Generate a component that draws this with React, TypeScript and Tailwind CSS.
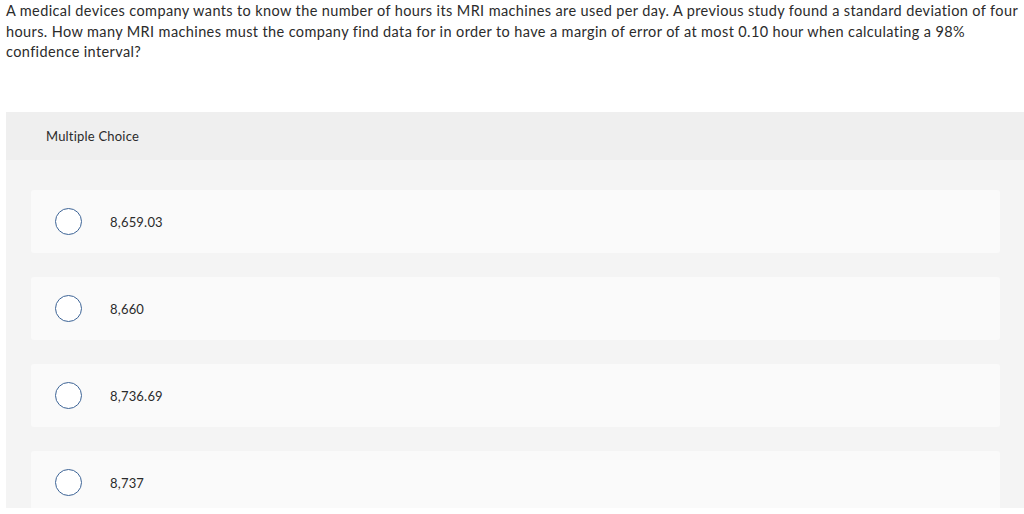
const choices = ["8,659.03", "8,660", "8,736.69", "8,737"];

export default function App() {
  return (
    <div
      className="h-[514px] overflow-hidden bg-white text-[#2b2b2b]"
      style={{ fontFamily: "Lato, 'Open Sans', Arial, sans-serif" }}
    >
      <p className="px-[6px] pt-[1px] text-[14.5px] leading-[20.5px] whitespace-nowrap tracking-[0.38px]">
        A medical devices company wants to know the number of hours its MRI machines are used per day. A previous study found a standard deviation of four
        <br />
        hours. How many MRI machines must the company find data for in order to have a margin of error of at most 0.10 hour when calculating a 98%
        <br />
        confidence interval?
      </p>
      <div className="ml-[6px] mt-[49px] h-[396px] overflow-hidden bg-[#f4f4f4]">
        <div className="flex h-[48px] items-center bg-[#efefef] pl-[40px] pt-[2px] text-[13px] tracking-[0.2px]">
          Multiple Choice
        </div>
        <div className="flex flex-col gap-[24px] pl-[25px] pr-[24px] pt-[30px]">
          {choices.map((c) => (
            <div
              key={c}
              className="flex h-[63px] shrink-0 items-center rounded-[3px] bg-[#fafafa] pl-[24px]"
            >
              <span className="h-[27px] w-[27px] rounded-full border border-[#3d6496] bg-white" />
              <span className="ml-[28px] mt-[3px] text-[13px] tracking-[0.2px]">{c}</span>
            </div>
          ))}
        </div>
      </div>
    </div>
  );
}
